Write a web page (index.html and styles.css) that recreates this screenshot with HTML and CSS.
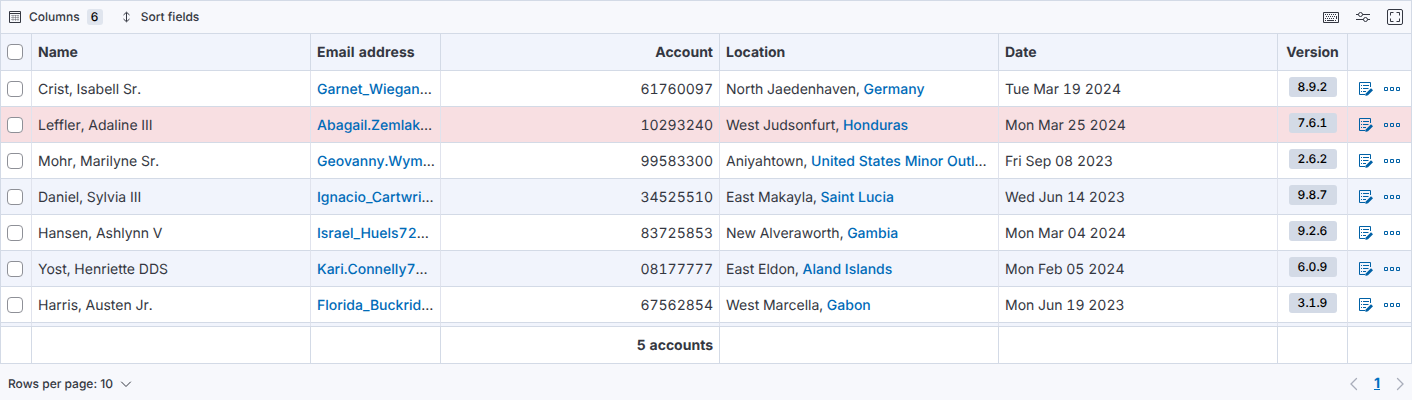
FILE: index.html
```
<!DOCTYPE html>
<html lang="en">
<head>
<meta charset="utf-8">
<title>Accounts</title>
<link rel="stylesheet" href="styles.css">
</head>
<body>
<svg class="defs" width="0" height="0">
  <symbol id="edit" viewBox="0 0 16 16">
    <path d="M7.500 13.500h-6v-12h11v4.500" fill="none" stroke="currentColor"/>
    <path d="M3 4.500h1M5 4.500h6M3 7.500h1M5 7.500h5.500M3 10.500h1M5 10.500h3" fill="none" stroke="currentColor"/>
    <path d="M13 7.200l2 2-5 5-2.600.9.600-2.900z" fill="currentColor"/>
  </symbol>
  <symbol id="dots" viewBox="0 0 16 16">
    <path d="M.5 6.500h3v3h-3zM6.500 6.500h3v3h-3zM12.500 6.500h3v3h-3z" fill="none" stroke="currentColor"/>
  </symbol>
</svg>
<main class="grid">
  <header class="toolbar">
    <button class="tool">
      <svg class="tool-icon" viewBox="0 0 12 12"><path d="M.5.5h11v11H.5zM.5 2.500h11" fill="none" stroke="currentColor"/><path d="M2 4.500h8M2 6.500h8M2 8.500h8M4 4v6M6.500 4v6M9 4v6" fill="none" stroke="currentColor" stroke-width=".6" opacity=".6"/></svg>
      <span>Columns</span><span class="count">6</span>
    </button>
    <button class="tool sort">
      <svg class="tool-icon" viewBox="0 0 12 12"><path d="M5.500 1.500v9M2.500 4l3-2.800L8.500 4M2.500 8l3 2.800L8.500 8" fill="none" stroke="currentColor"/></svg>
      <span>Sort fields</span>
    </button>
    <div class="tools-right">
      <svg viewBox="0 0 16 16"><path d="M.5 3.500h15v10H.5z" fill="none" stroke="currentColor"/><path d="M2 5.500h12M3 7.500h9" fill="none" stroke="currentColor" stroke-dasharray="1 1"/><path d="M2 9.500h1M4 9.500h1M6 9.500h1M8 9.500h1M10 9.500h1M2 11.500h1M4 11.500h7M12 11.500h1M13.500 7v3" fill="none" stroke="currentColor"/></svg>
      <svg viewBox="0 0 16 16"><path d="M1 5.500h2.500M7.500 5.500H15M1 10.500h7.500M12.500 10.500H15" fill="none" stroke="currentColor"/><circle cx="5.500" cy="5.500" r="2" fill="none" stroke="currentColor"/><circle cx="10.500" cy="10.500" r="2" fill="none" stroke="currentColor"/></svg>
      <svg viewBox="0 0 16 16"><rect x=".5" y=".5" width="15" height="15" rx="1.500" fill="none" stroke="currentColor"/><path d="M3.500 6.500v-3h3M9.500 3.500h3v3M12.500 9.500v3h-3M6.500 12.500h-3v-3" fill="none" stroke="currentColor"/></svg>
    </div>
  </header>

  <div class="row head">
    <div class="cell check"><i class="box"></i></div><div class="cell">Name</div><div class="cell wide">Email address</div><div class="cell num">Account</div><div class="cell">Location</div><div class="cell">Date</div><div class="cell version">Version</div><div class="cell"></div>
  </div>

  <div class="body">
    <div class="row">
      <div class="cell check"><i class="box"></i></div><div class="cell">Crist, Isabell Sr.</div><div class="cell"><a>Garnet_Wiegan</a>…</div><div class="cell num">61760097</div><div class="cell">North Jaedenhaven, <a>Germany</a></div><div class="cell">Tue Mar 19 2024</div><div class="cell version"><span class="badge">8.9.2</span></div><div class="cell actions"><svg><use href="#edit"/></svg><svg><use href="#dots"/></svg></div>
    </div>
    <div class="row danger">
      <div class="cell check"><i class="box"></i></div><div class="cell">Leffler, Adaline III</div><div class="cell"><a>Abagail.Zemlak</a>…</div><div class="cell num">10293240</div><div class="cell">West Judsonfurt, <a>Honduras</a></div><div class="cell">Mon Mar 25 2024</div><div class="cell version"><span class="badge">7.6.1</span></div><div class="cell actions"><svg><use href="#edit"/></svg><svg><use href="#dots"/></svg></div>
    </div>
    <div class="row">
      <div class="cell check"><i class="box"></i></div><div class="cell">Mohr, Marilyne Sr.</div><div class="cell"><a>Geovanny.Wym</a>…</div><div class="cell num">99583300</div><div class="cell">Aniyahtown, <a>United States Minor Outl</a>…</div><div class="cell">Fri Sep 08 2023</div><div class="cell version"><span class="badge">2.6.2</span></div><div class="cell actions"><svg><use href="#edit"/></svg><svg><use href="#dots"/></svg></div>
    </div>
    <div class="row stripe">
      <div class="cell check"><i class="box"></i></div><div class="cell">Daniel, Sylvia III</div><div class="cell"><a>Ignacio_Cartwri</a>…</div><div class="cell num">34525510</div><div class="cell">East Makayla, <a>Saint Lucia</a></div><div class="cell">Wed Jun 14 2023</div><div class="cell version"><span class="badge">9.8.7</span></div><div class="cell actions"><svg><use href="#edit"/></svg><svg><use href="#dots"/></svg></div>
    </div>
    <div class="row">
      <div class="cell check"><i class="box"></i></div><div class="cell">Hansen, Ashlynn V</div><div class="cell"><a>Israel_Huels72</a>…</div><div class="cell num">83725853</div><div class="cell">New Alveraworth, <a>Gambia</a></div><div class="cell">Mon Mar 04 2024</div><div class="cell version"><span class="badge">9.2.6</span></div><div class="cell actions"><svg><use href="#edit"/></svg><svg><use href="#dots"/></svg></div>
    </div>
    <div class="row stripe">
      <div class="cell check"><i class="box"></i></div><div class="cell">Yost, Henriette DDS</div><div class="cell"><a>Kari.Connelly7</a>…</div><div class="cell num">08177777</div><div class="cell">East Eldon, <a>Aland Islands</a></div><div class="cell">Mon Feb 05 2024</div><div class="cell version"><span class="badge">6.0.9</span></div><div class="cell actions"><svg><use href="#edit"/></svg><svg><use href="#dots"/></svg></div>
    </div>
    <div class="row">
      <div class="cell check"><i class="box"></i></div><div class="cell">Harris, Austen Jr.</div><div class="cell"><a>Florida_Buckrid</a>…</div><div class="cell num">67562854</div><div class="cell">West Marcella, <a>Gabon</a></div><div class="cell">Mon Jun 19 2023</div><div class="cell version"><span class="badge">3.1.9</span></div><div class="cell actions"><svg><use href="#edit"/></svg><svg><use href="#dots"/></svg></div>
    </div>
    <div class="row stripe">
      <div class="cell"></div><div class="cell"></div><div class="cell"></div><div class="cell"></div><div class="cell"></div><div class="cell"></div><div class="cell"></div><div class="cell"></div>
    </div>
  </div>

  <div class="row foot">
    <div class="cell"></div><div class="cell"></div><div class="cell"></div><div class="cell num">5 accounts</div><div class="cell"></div><div class="cell"></div><div class="cell"></div><div class="cell"></div>
  </div>
</main>
<footer class="pager">
  <button class="tool">Rows per page: 10
    <svg class="caret" viewBox="0 0 12 12"><path d="M1.500 4l4.500 4.500L10.500 4" fill="none" stroke="currentColor" stroke-linecap="round"/></svg>
  </button>
  <nav class="pages">
    <svg viewBox="0 0 16 16"><path d="M10.500 2.500L5 8l5.500 5.500" fill="none" stroke="currentColor" stroke-width="1.300" stroke-linecap="round"/></svg>
    <a class="page">1</a>
    <svg viewBox="0 0 16 16"><path d="M5.500 2.500L11 8l-5.500 5.500" fill="none" stroke="currentColor" stroke-width="1.300" stroke-linecap="round"/></svg>
  </nav>
</footer>
</body>
</html>
```
FILE: styles.css
```
* { box-sizing: border-box; }
body {
  margin: 0;
  height: 400px;
  overflow: hidden;
  background: #f7f8fc;
  color: #343741;
  font: 400 14px/24px Inter, sans-serif;
  text-rendering: geometricPrecision;
}
.defs { position: absolute; }
svg { display: block; flex: none; }
button { border: 0; padding: 0; background: none; color: inherit; font: inherit; text-rendering: inherit; }
a { color: #006bb8; font-weight: 500; }

.grid { border: 1px solid #d3dae6; border-bottom: 0; height: 364px; }

.toolbar {
  display: flex;
  align-items: center;
  height: 33px;
  padding: 0 8px;
  border-bottom: 1px solid #d3dae6;
}
.tool { display: flex; align-items: center; gap: 7px; font-size: 12px; font-weight: 500; }
.tool-icon { width: 12px; height: 12px; margin-right: 1px; }
.tool.sort { margin-left: 18px; }
.count {
  width: 16px;
  height: 16px;
  border-radius: 3px;
  background: #e0e5ee;
  color: #000;
  line-height: 16px;
  text-align: center;
}
.tools-right { display: flex; gap: 16px; margin-left: auto; }
.tools-right svg { width: 16px; height: 16px; }

.row {
  display: grid;
  grid-template-columns: 31px 279px 130px 279px 279px 279px 70px 63px;
  height: 36px;
  background: #fff;
  font-feature-settings: "tnum";
}
.cell {
  padding: 7px 6px 4px;
  border-right: 1px solid #e0e3ed;
  border-bottom: 1px solid #d3dae6;
  white-space: nowrap;
  overflow: hidden;
}
.cell:last-child { border-right: 0; }
.num { text-align: right; }
.stripe { background: #f1f4fc; }
.danger { background: #f8dfe2; }
.head { height: 37px; background: #f1f4fc; font-weight: 700; }
.head .cell, .foot .cell { border-right-color: #d3dae6; }
.head .wide { letter-spacing: .15px; }
.check { padding: 10px 6px; }
.box {
  display: block;
  width: 16px;
  height: 16px;
  border: 1px solid #8e9097;
  border-radius: 4px;
  background: #fff;
}
.version { display: flex; justify-content: center; }
.version:has(.badge) { padding-top: 6px; }
.badge {
  width: 48px;
  height: 20px;
  border-radius: 3px;
  background: #d3dae6;
  color: #000;
  font-size: 12px;
  font-weight: 500;
  line-height: 20px;
  text-align: center;
}
.actions { display: flex; gap: 10px; padding: 10px 0 0 10px; color: #0061a6; }
.actions svg { width: 16px; height: 16px; }

.body { height: 255px; overflow: hidden; }
.foot { height: 38px; border-top: 1px solid #d3dae6; font-weight: 700; }

.pager { display: flex; align-items: center; justify-content: space-between; height: 36px; padding: 4px 4px 0 8px; }
.caret { width: 12px; height: 12px; }
.pages { display: flex; align-items: center; color: #a9adba; }
.pages svg { width: 16px; height: 16px; }
.page { width: 30px; color: #0071c2; font-weight: 700; text-align: center; text-decoration: underline; }
```
